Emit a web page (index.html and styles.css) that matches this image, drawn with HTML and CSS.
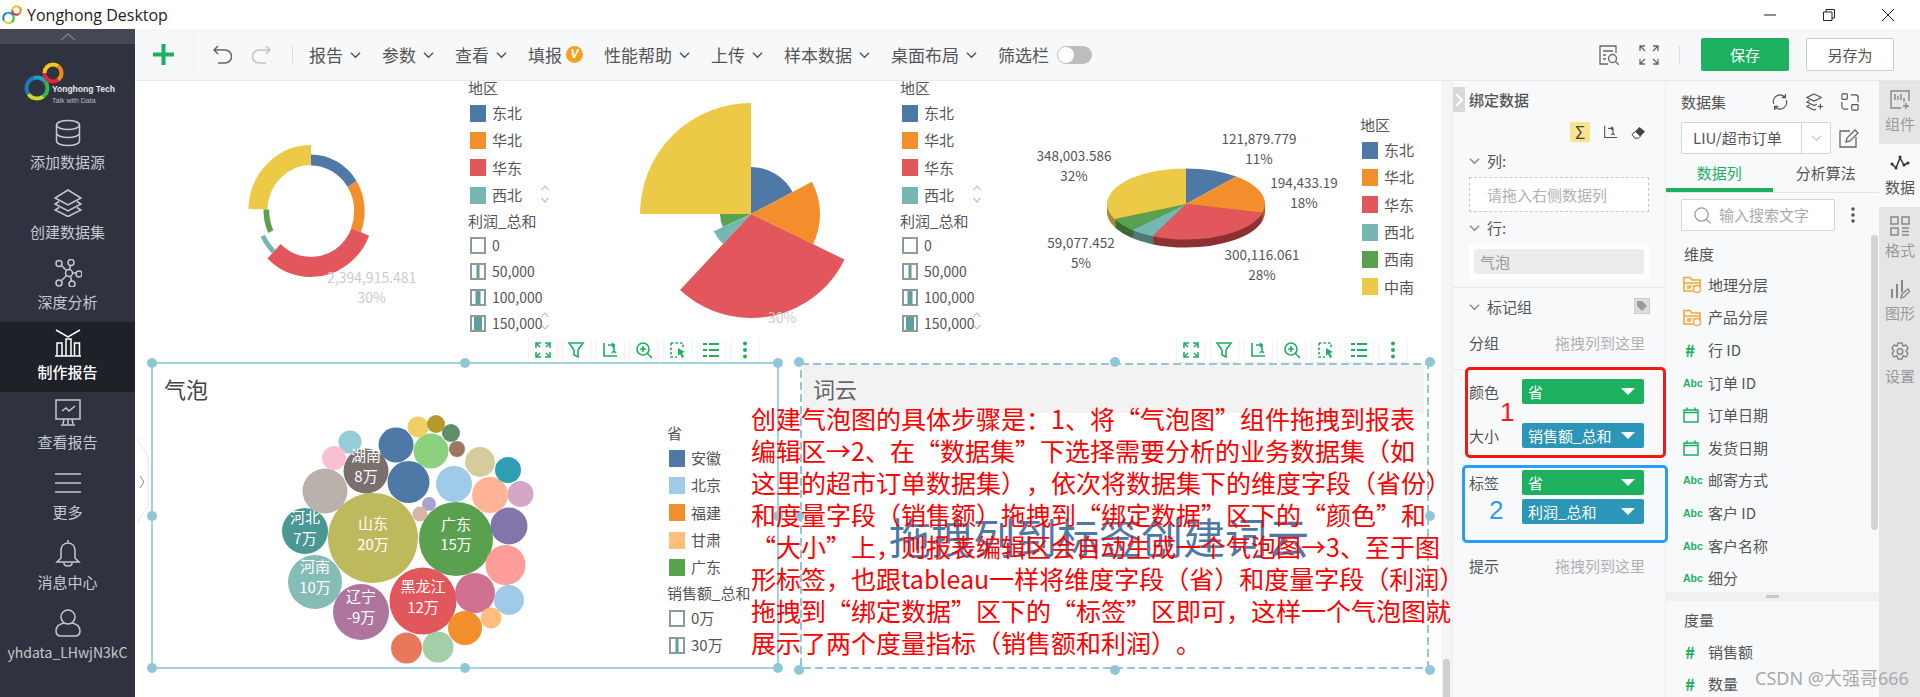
FILE: index.html
```html
<!DOCTYPE html>
<html lang="zh-CN">
<head>
	<meta charset="utf-8">
	<title>Yonghong Desktop</title>
	<link rel="stylesheet" href="styles.css">
</head>
<body>
	<svg class="defs" width="0" height="0">
		<symbol id="logo" viewBox="0 0 40 40">
			<g fill="none" stroke-width="4">
				<circle cx="13" cy="26" r="10.5" stroke="#1b7cc4" pathLength="100" stroke-dasharray="30 70" stroke-dashoffset="-40"/>
				<circle cx="13" cy="26" r="10.5" stroke="#18a6b8" pathLength="100" stroke-dasharray="20 80" stroke-dashoffset="-70"/>
				<circle cx="13" cy="26" r="10.5" stroke="#3ab54a" pathLength="100" stroke-dasharray="25 75" stroke-dashoffset="-90"/>
				<circle cx="13" cy="26" r="10.5" stroke="#c9d92f" pathLength="100" stroke-dasharray="25 75" stroke-dashoffset="-15"/>
				<circle cx="29" cy="11" r="8.5" stroke="#f7c51e" pathLength="100" stroke-dasharray="35 65" stroke-dashoffset="-50"/>
				<circle cx="29" cy="11" r="8.5" stroke="#f28a1e" pathLength="100" stroke-dasharray="30 70" stroke-dashoffset="-85"/>
				<circle cx="29" cy="11" r="8.5" stroke="#e5243f" pathLength="100" stroke-dasharray="35 65" stroke-dashoffset="-15"/>
			</g>
		</symbol>
		<symbol id="chev" viewBox="0 0 12 8"><polyline points="1,1.5 6,6.5 11,1.5" fill="none" stroke="currentColor" stroke-width="1.5"/></symbol>
		<symbol id="t-expand" viewBox="0 0 18 18"><path d="M2 7V2h5M11 2h5v5M16 11v5h-5M7 16H2v-5M2 2l4 4M16 2l-4 4M16 16l-4-4M2 16l4-4" fill="none" stroke="currentColor" stroke-width="1.6"/></symbol>
		<symbol id="t-filter" viewBox="0 0 18 18"><path d="M2 2h14l-5 7v7l-4-2V9z" fill="none" stroke="currentColor" stroke-width="1.6"/></symbol>
		<symbol id="t-axis" viewBox="0 0 18 18"><path d="M3 2v13h13M7 4h6v6M11 2l2 2-2 2M11 12l2-2 2 2" fill="none" stroke="currentColor" stroke-width="1.6"/></symbol>
		<symbol id="t-zoom" viewBox="0 0 18 18"><circle cx="8" cy="8" r="6" fill="none" stroke="currentColor" stroke-width="1.6"/><path d="M12.5 12.5L17 17M5 8h6M8 5v6" fill="none" stroke="currentColor" stroke-width="1.6"/></symbol>
		<symbol id="t-select" viewBox="0 0 18 18"><path d="M2 2h12v6M2 2v14h6" fill="none" stroke="currentColor" stroke-width="1.6" stroke-dasharray="2.5 2"/><path d="M9 7l7 4-3 1 2 4-2 1-2-4-2 2z" fill="currentColor"/></symbol>
		<symbol id="t-list" viewBox="0 0 18 18"><path d="M1 3h4M7 3h10M1 9h4M7 9h10M1 15h4M7 15h10" fill="none" stroke="currentColor" stroke-width="2.2"/></symbol>
		<symbol id="t-dots" viewBox="0 0 18 18"><circle cx="9" cy="2.5" r="2" fill="currentColor"/><circle cx="9" cy="9" r="2" fill="currentColor"/><circle cx="9" cy="15.5" r="2" fill="currentColor"/></symbol>
		<symbol id="folder" viewBox="0 0 18 17"><path d="M1 15V1.500h6l2 2.500h8v11z" fill="none" stroke="#f5a63a" stroke-width="1.600"/><path d="M1 7h16M4 10h4l-1 2H4M10 10h3" fill="none" stroke="#f5a63a" stroke-width="1.300"/><circle cx="14" cy="13" r="3.500" fill="#f8f9fb" stroke="#f5a63a" stroke-width="1.300"/></symbol>
		<symbol id="cal" viewBox="0 0 16 16"><path d="M1 3h14v12H1zM1 5.500h14" fill="none" stroke="#1db05e" stroke-width="1.500"/><path d="M4 .5v3M12 .5v3" stroke="#1db05e" stroke-width="1.500"/></symbol>
		<symbol id="updown" viewBox="0 0 10 20"><path d="M1.500 6l3.500-4 3.500 4M1.500 14l3.500 4 3.500-4" fill="none" stroke="#b5b5b5" stroke-width="1.100"/></symbol>
	</svg>

	<header class="titlebar">
		<svg class="title-logo"><use href="#logo"/></svg>
		<span class="title-text">Yonghong Desktop</span>
		<div class="win-btns">
			<svg viewBox="0 0 14 14"><path d="M1 7h12" stroke="#222" fill="none"/></svg>
			<svg viewBox="0 0 14 14"><path d="M1.500 4h8.500v8.500H1.500zM4 4V1.500h8.500V10H10" stroke="#222" fill="none"/></svg>
			<svg viewBox="0 0 14 14"><path d="M1 1l12 12M13 1L1 13" stroke="#222" fill="none"/></svg>
		</div>
	</header>

	<div class="main">
		<nav class="sidebar">
			<div class="side-top"><svg viewBox="0 0 16 8"><polyline points="1,7 8,1 15,7" fill="none" stroke="#777b86" stroke-width="1.600"/></svg></div>
			<div class="side-logo">
				<svg class="side-logo-mark"><use href="#logo"/></svg>
				<div class="side-logo-text"><b>Yonghong Tech</b><span>Talk with Data</span></div>
			</div>
			<a class="side-item">
				<svg viewBox="0 0 28 28"><ellipse cx="14" cy="6" rx="11.500" ry="4.500"/><path d="M2.500 6v16c0 2.500 5 4.500 11.500 4.500S25.500 24.500 25.500 22V6M2.500 14c0 2.500 5 4.500 11.500 4.500S25.500 16.500 25.500 14"/></svg>
				<span>添加数据源</span>
			</a>
			<a class="side-item">
				<svg viewBox="0 0 28 28"><path d="M14 1L27 9 14 16 1 9zM5 12.500l-4 2.500 13 7 13-7-4-2.500M5 18.500L1 21l13 6.500L27 21l-4-2.500"/></svg>
				<span>创建数据集</span>
			</a>
			<a class="side-item">
				<svg viewBox="0 0 28 28"><circle cx="15" cy="14" r="3.500"/><circle cx="5" cy="4.500" r="3"/><circle cx="17" cy="3.500" r="3"/><circle cx="25" cy="15" r="3"/><circle cx="18" cy="25" r="3"/><circle cx="5" cy="24" r="3"/><path d="M7.500 6.500l5 5M16.500 6.500l-1 4M18.500 14h3.500M16.500 17.500l1 4.500M12.500 16.500l-5.500 5.500"/></svg>
				<span>深度分析</span>
			</a>
			<a class="side-item active">
				<svg viewBox="0 0 28 28"><path d="M2 1l12 7 12-7M3 27V14h5v13zM12 27V10h5v17zM20.500 27V14h5v13zM1 27h26"/></svg>
				<span>制作报告</span>
			</a>
			<a class="side-item">
				<svg viewBox="0 0 28 28"><path d="M2 1h24v19H2zM8 12l4-3 3 3 6-5M14 20v5M7 26h14M9 25l1-5M19 25l-1-5"/></svg>
				<span>查看报告</span>
			</a>
			<a class="side-item">
				<svg viewBox="0 0 28 28"><path d="M1 5h26M1 14h26M1 23h26"/></svg>
				<span>更多</span>
			</a>
			<a class="side-item">
				<svg viewBox="0 0 28 28"><path d="M14 1v3M14 4c-5 0-7 4-7 8v7l-4 4h22l-4-4v-7c0-4-2-8-7-8zM10 24c0 2 2 3 4 3s4-1 4-3"/></svg>
				<span>消息中心</span>
			</a>
			<a class="side-item side-user">
				<svg viewBox="0 0 28 28"><ellipse cx="14" cy="8" rx="7" ry="7"/><path d="M10 14c-5 1-8 4-8 8 0 3 2 5 5 5h14c3 0 5-2 5-5 0-4-3-7-8-8"/></svg>
				<span>yhdata_LHwjN3kC</span>
			</a>
		</nav>

		<div class="content">
			<div class="toolbar">
				<svg class="tb-plus" viewBox="0 0 21 21"><path d="M10.500 0v21M0 10.500h21" stroke="#1db05e" stroke-width="4"/></svg>
				<span class="tb-sep tb-sep-tall"></span>
				<svg class="tb-hist" viewBox="0 0 20 20"><path d="M6 1L2 5l4 4M2 5h11a6 6 0 0 1 0 13H6" fill="none" stroke="#666" stroke-width="1.500"/></svg>
				<svg class="tb-hist" viewBox="0 0 20 20"><path d="M14 1l4 4-4 4M18 5H7a6 6 0 0 0 0 13h7" fill="none" stroke="#c4c4c4" stroke-width="1.500"/></svg>
				<span class="tb-sep"></span>
				<div class="tb-menu">
					<span class="tb-item">报告<svg><use href="#chev"/></svg></span>
					<span class="tb-item">参数<svg><use href="#chev"/></svg></span>
					<span class="tb-item">查看<svg><use href="#chev"/></svg></span>
					<span class="tb-item tb-fill">填报<i class="tb-badge">V</i></span>
					<span class="tb-item">性能帮助<svg><use href="#chev"/></svg></span>
					<span class="tb-item">上传<svg><use href="#chev"/></svg></span>
					<span class="tb-item">样本数据<svg><use href="#chev"/></svg></span>
					<span class="tb-item">桌面布局<svg><use href="#chev"/></svg></span>
					<span class="tb-item tb-filter">筛选栏<i class="toggle"></i></span>
				</div>
				<div class="tb-right">
					<svg class="tb-icon" viewBox="0 0 20 20"><path d="M17 8V1H1v18h8M4 6h10M4 10h3M4 14h3" fill="none" stroke="#666" stroke-width="1.300"/><circle cx="13.500" cy="13.500" r="4" fill="none" stroke="#666" stroke-width="1.300"/><path d="M16.500 16.500L20 20" stroke="#666" stroke-width="1.300"/></svg>
					<svg class="tb-icon" viewBox="0 0 20 20"><path d="M1 6V1h5M1 1l5 5M19 6V1h-5M19 1l-5 5M1 14v5h5M1 19l5-5M19 14v5h-5M19 19l-5-5" fill="none" stroke="#666" stroke-width="1.300"/></svg>
					<span class="tb-sep"></span>
					<button class="btn-save">保存</button>
					<button class="btn-saveas">另存为</button>
				</div>
			</div>

			<div class="workspace">
				<section class="canvas">
					<svg class="side-tab" viewBox="0 0 12 86"><path d="M1 0c0 8 10 12 10 22v42C11 74 1 78 1 86" fill="#fff" stroke="#e6e7ee"/><polyline points="3,38 7,44 3,50" fill="none" stroke="#888"/></svg>

					<svg class="chart-donut" viewBox="240 135 135 150">
						<g fill="none" transform="translate(311 211) scale(.95 1) rotate(-90) translate(-311 -211)">
							<circle cx="311" cy="211" r="51" stroke-width="11" stroke="#4e79a7" pathLength="360" stroke-dasharray="58 360"/>
							<circle cx="311" cy="211" r="51" stroke-width="11" stroke="#f28e2b" pathLength="360" stroke-dasharray="54 360" stroke-dashoffset="-58"/>
							<circle cx="311" cy="211" r="56" stroke-width="20" stroke="#e1575b" pathLength="360" stroke-dasharray="112 360" stroke-dashoffset="-112"/>
							<circle cx="311" cy="211" r="56.500" stroke-width="5" stroke="#76b7b2" pathLength="360" stroke-dasharray="20 360" stroke-dashoffset="-224"/>
							<circle cx="311" cy="211" r="47" stroke-width="6" stroke="#59a14f" pathLength="360" stroke-dasharray="28 360" stroke-dashoffset="-244"/>
							<circle cx="311" cy="211" r="56" stroke-width="20" stroke="#edc948" pathLength="360" stroke-dasharray="88 360" stroke-dashoffset="-272"/>
						</g>
					</svg>
					<div class="pct pct-donut">2,394,915.481<br>30%</div>
					<div class="legend legend-a">
						<div class="legend-title">地区</div>
						<div class="legend-row"><i class="sw c-blue"></i>东北</div>
						<div class="legend-row"><i class="sw c-orange"></i>华北</div>
						<div class="legend-row"><i class="sw c-red"></i>华东</div>
						<div class="legend-row"><i class="sw c-teal"></i>西北</div>
						<div class="legend-title">利润_总和</div>
						<div class="legend-row size"><i class="sw-size"></i>0</div>
						<div class="legend-row size"><i class="sw-size s1"></i>50,000</div>
						<div class="legend-row size"><i class="sw-size s2"></i>100,000</div>
						<div class="legend-row size"><i class="sw-size s3"></i>150,000</div>
						<svg class="updown ud-1"><use href="#updown"/></svg>
						<svg class="updown ud-2"><use href="#updown"/></svg>
					</div>

					<svg class="chart-rose" viewBox="635 100 220 222">
						<g fill="none" transform="rotate(-90 751 214)">
							<circle cx="751" cy="214" r="23.500" stroke-width="47" stroke="#4e79a7" pathLength="360" stroke-dasharray="62 360"/>
							<circle cx="751" cy="214" r="15.500" stroke-width="31" stroke="#59a14f" pathLength="360" stroke-dasharray="25 360" stroke-dashoffset="-245"/>
							<circle cx="751" cy="214" r="20.500" stroke-width="41" stroke="#76b7b2" pathLength="360" stroke-dasharray="22 360" stroke-dashoffset="-223"/>
							<circle cx="751" cy="214" r="34.500" stroke-width="69" stroke="#f28e2b" pathLength="360" stroke-dasharray="54 360" stroke-dashoffset="-62"/>
							<circle cx="751" cy="214" r="52" stroke-width="104" stroke="#e1575b" pathLength="360" stroke-dasharray="107 360" stroke-dashoffset="-116"/>
							<circle cx="751" cy="214" r="55.500" stroke-width="111" stroke="#edc948" pathLength="360" stroke-dasharray="90 360" stroke-dashoffset="-270"/>
						</g>
					</svg>
					<div class="pct pct-rose">30%</div>
					<div class="legend legend-b">
						<div class="legend-title">地区</div>
						<div class="legend-row"><i class="sw c-blue"></i>东北</div>
						<div class="legend-row"><i class="sw c-orange"></i>华北</div>
						<div class="legend-row"><i class="sw c-red"></i>华东</div>
						<div class="legend-row"><i class="sw c-teal"></i>西北</div>
						<div class="legend-title">利润_总和</div>
						<div class="legend-row size"><i class="sw-size"></i>0</div>
						<div class="legend-row size"><i class="sw-size s1"></i>50,000</div>
						<div class="legend-row size"><i class="sw-size s2"></i>100,000</div>
						<div class="legend-row size"><i class="sw-size s3"></i>150,000</div>
						<svg class="updown ud-1"><use href="#updown"/></svg>
						<svg class="updown ud-2"><use href="#updown"/></svg>
					</div>

					<svg class="chart-pie" viewBox="1100 160 175 95">
						<g fill="none">
							<g id="pie-side" transform="translate(1186 212) scale(1 .45) rotate(-90)">
								<circle r="39.500" stroke-width="79" stroke="#a3601c" pathLength="360" stroke-dasharray="65 360" stroke-dashoffset="-39.600"/>
								<circle r="39.500" stroke-width="79" stroke="#8c3133" pathLength="360" stroke-dasharray="101 360" stroke-dashoffset="-104.400"/>
								<circle r="39.500" stroke-width="79" stroke="#4b7a78" pathLength="360" stroke-dasharray="18 360" stroke-dashoffset="-205.200"/>
								<circle r="39.500" stroke-width="79" stroke="#3a6a34" pathLength="360" stroke-dasharray="21.600 360" stroke-dashoffset="-223.200"/>
								<circle r="39.500" stroke-width="79" stroke="#a38c32" pathLength="360" stroke-dasharray="115.200 360" stroke-dashoffset="-244.800"/>
							</g>
							<use href="#pie-side" y="-2"/>
							<use href="#pie-side" y="-4"/>
							<use href="#pie-side" y="-6"/>
							<g transform="translate(1186 204) scale(1 .45) rotate(-90)">
								<circle r="39.500" stroke-width="79" stroke="#4e79a7" pathLength="360" stroke-dasharray="39.600 360"/>
								<circle r="39.500" stroke-width="79" stroke="#f28e2b" pathLength="360" stroke-dasharray="64.800 360" stroke-dashoffset="-39.600"/>
								<circle r="39.500" stroke-width="79" stroke="#e1575b" pathLength="360" stroke-dasharray="100.800 360" stroke-dashoffset="-104.400"/>
								<circle r="39.500" stroke-width="79" stroke="#76b7b2" pathLength="360" stroke-dasharray="18 360" stroke-dashoffset="-205.200"/>
								<circle r="39.500" stroke-width="79" stroke="#59a14f" pathLength="360" stroke-dasharray="21.600 360" stroke-dashoffset="-223.200"/>
								<circle r="39.500" stroke-width="79" stroke="#edc948" pathLength="360" stroke-dasharray="115.200 360" stroke-dashoffset="-244.800"/>
							</g>
						</g>
					</svg>
					<div class="pie-label pl-1">121,879.779<br>11%</div>
					<div class="pie-label pl-2">348,003.586<br>32%</div>
					<div class="pie-label pl-3">194,433.19<br>18%</div>
					<div class="pie-label pl-4">59,077.452<br>5%</div>
					<div class="pie-label pl-5">300,116.061<br>28%</div>
					<div class="legend legend-c">
						<div class="legend-title">地区</div>
						<div class="legend-row"><i class="sw c-blue"></i>东北</div>
						<div class="legend-row"><i class="sw c-orange"></i>华北</div>
						<div class="legend-row"><i class="sw c-red"></i>华东</div>
						<div class="legend-row"><i class="sw c-teal"></i>西北</div>
						<div class="legend-row"><i class="sw c-green"></i>西南</div>
						<div class="legend-row"><i class="sw c-yellow"></i>中南</div>
					</div>

					<div class="w-tools w-tools-a">
						<span><svg><use href="#t-expand"/></svg></span>
						<span><svg><use href="#t-filter"/></svg></span>
						<span><svg><use href="#t-axis"/></svg></span>
						<span><svg><use href="#t-zoom"/></svg></span>
						<span><svg><use href="#t-select"/></svg></span>
						<span><svg><use href="#t-list"/></svg></span>
						<span><svg><use href="#t-dots"/></svg></span>
					</div>
					<div class="w-tools w-tools-b">
						<span><svg><use href="#t-expand"/></svg></span>
						<span><svg><use href="#t-filter"/></svg></span>
						<span><svg><use href="#t-axis"/></svg></span>
						<span><svg><use href="#t-zoom"/></svg></span>
						<span><svg><use href="#t-select"/></svg></span>
						<span><svg><use href="#t-list"/></svg></span>
						<span><svg><use href="#t-dots"/></svg></span>
					</div>

					<!-- 气泡 -->
					<div class="frame frame-bubble">
						<h3 class="bubble-title">气泡</h3>
						<i class="handle tl"></i><i class="handle tm"></i><i class="handle tr"></i>
						<i class="handle ml"></i><i class="handle mr"></i>
						<i class="handle bl"></i><i class="handle bm"></i><i class="handle br"></i>
					</div>
					<svg class="chart-bubble" viewBox="280 410 260 260">
						<circle cx="373" cy="538" r="45" fill="#bfb95e"/>
						<circle cx="456" cy="539" r="37" fill="#59a14f"/>
						<circle cx="423" cy="601" r="33.500" fill="#e1575b"/>
						<circle cx="361" cy="612" r="28" fill="#ae769f"/>
						<circle cx="315" cy="582" r="27" fill="#86bcb6"/>
						<circle cx="305" cy="531" r="23" fill="#499894"/>
						<circle cx="366" cy="471" r="22.500" fill="#79706e"/>
						<circle cx="325" cy="491" r="22.500" fill="#bab0ac"/>
						<circle cx="408.500" cy="482" r="21" fill="#4e79a7"/>
						<circle cx="396" cy="445" r="17.500" fill="#4e79a7"/>
						<circle cx="431" cy="451" r="17.500" fill="#8cd17d"/>
						<circle cx="454" cy="484" r="18" fill="#a0cbe8"/>
						<circle cx="490" cy="495" r="18" fill="#ffb595"/>
						<circle cx="480" cy="462" r="15" fill="#d7cc9e"/>
						<circle cx="508" cy="470" r="13" fill="#2e9fb3"/>
						<circle cx="520.500" cy="494" r="13" fill="#d4a6c8"/>
						<circle cx="509" cy="526" r="18.500" fill="#8175aa"/>
						<circle cx="505.500" cy="565" r="20" fill="#ff9d9a"/>
						<circle cx="475" cy="593" r="20" fill="#d07192"/>
						<circle cx="509" cy="600" r="15" fill="#a0cbe8"/>
						<circle cx="491" cy="618" r="10.500" fill="#ffbe7d"/>
						<circle cx="465" cy="628" r="17" fill="#f28e2b"/>
						<circle cx="438" cy="647" r="15.500" fill="#a2ceaa"/>
						<circle cx="406.500" cy="648" r="15.500" fill="#e8785c"/>
						<circle cx="418" cy="427" r="10.500" fill="#f1ce63"/>
						<circle cx="436" cy="424" r="9" fill="#b6992d"/>
						<circle cx="451" cy="433" r="9" fill="#5f8d68"/>
						<circle cx="457" cy="449" r="8" fill="#9d7660"/>
						<circle cx="350" cy="442" r="11.500" fill="#96ccd6"/>
						<circle cx="334" cy="458" r="12" fill="#fabfd2"/>
						<circle cx="429" cy="504" r="7" fill="#a9a3cf"/>
						<circle cx="420" cy="514" r="7.500" fill="#d9b4a6"/>
						<g class="bubble-text">
							<text x="373" y="529">山东</text><text x="373" y="550">20万</text>
							<text x="456" y="530">广东</text><text x="456" y="550">15万</text>
							<text x="423" y="592">黑龙江</text><text x="423" y="613">12万</text>
							<text x="361" y="602">辽宁</text><text x="361" y="623">-9万</text>
							<text x="315" y="572">河南</text><text x="315" y="593">10万</text>
							<text x="305" y="523">河北</text><text x="305" y="544">7万</text>
							<text x="366" y="461">湖南</text><text x="366" y="482">8万</text>
						</g>
					</svg>
					<div class="legend legend-d">
						<div class="legend-title">省</div>
						<div class="legend-row"><i class="sw c-blue"></i>安徽</div>
						<div class="legend-row"><i class="sw c-lblue"></i>北京</div>
						<div class="legend-row"><i class="sw c-orange"></i>福建</div>
						<div class="legend-row"><i class="sw c-peach"></i>甘肃</div>
						<div class="legend-row"><i class="sw c-green"></i>广东</div>
						<div class="legend-title">销售额_总和</div>
						<div class="legend-row"><i class="sw-size"></i>0万</div>
						<div class="legend-row"><i class="sw-size s1"></i>30万</div>
					</div>

					<!-- 词云 -->
					<div class="frame-word">
						<svg class="dash-line" viewBox="0 0 629 306"><rect x="1" y="1" width="627" height="304" fill="none" stroke="#8fc7d8" stroke-width="2" stroke-dasharray="8 4"/></svg>
						<div class="word-head">词云</div>
						<div class="word-hint">拖拽列到标签创建词云</div>
						<i class="handle tl"></i><i class="handle tm"></i><i class="handle tr"></i>
						<i class="handle ml"></i><i class="handle mr"></i>
						<i class="handle bl"></i><i class="handle bm"></i><i class="handle br"></i>
					</div>

					<div class="note">创建气泡图的具体步骤是：1、将“气泡图”组件拖拽到报表<br>编辑区→2、在“数据集”下选择需要分析的业务数据集（如<br>这里的超市订单数据集），依次将数据集下的维度字段（省份）<br>和度量字段（销售额）拖拽到“绑定数据”区下的“颜色”和<br>“大小”上，则报表编辑区会自动生成一个气泡图→3、至于图<br>形标签，也跟tableau一样将维度字段（省）和度量字段（利润）<br>拖拽到“绑定数据”区下的“标签”区即可，这样一个气泡图就<br>展示了两个度量指标（销售额和利润）。</div>
				</section>

				<div class="canvas-scroll"><i></i></div>

				<section class="bind">
					<div class="collapse"><svg viewBox="0 0 8 14"><polyline points="1,1 7,7 1,13" fill="none" stroke="#fff" stroke-width="1.800"/></svg></div>
					<div class="bind-head">绑定数据</div>
					<div class="bind-tools">
						<span class="sigma">Σ</span>
						<svg viewBox="0 0 18 18"><path d="M2 1v14h15M6 4h6v6M10 2l2 2-2 2M10 12l2-2 2 2" fill="none" stroke="#555" stroke-width="1.300"/></svg>
						<svg viewBox="0 0 16 14"><path d="M1 9l8-8 6 5-7 7H4z" fill="#444"/><path d="M1 9l3 4h4l2-2-5-5z" fill="#fff" stroke="#444"/></svg>
					</div>
					<div class="bind-label"><svg><use href="#chev"/></svg>列:</div>
					<div class="drop-box">请拖入右侧数据列</div>
					<div class="bind-label"><svg><use href="#chev"/></svg>行:</div>
					<div class="row-box"><span>气泡</span></div>
					<div class="mark-head">
						<svg><use href="#chev"/></svg>标记组
						<svg class="tag-icon" viewBox="0 0 16 16"><rect x=".5" y=".5" width="15" height="15" fill="#ddd" stroke="#ccc"/><path d="M3 3h5l5 5-5 5-5-5z" fill="#999"/></svg>
					</div>
					<div class="mark-line group-line"><span>分组</span><em>拖拽列到这里</em></div>
					<div class="mark-group first">
						<div class="mark-row"><span>颜色</span><b class="chip green">省</b></div>
						<div class="mark-row"><span>大小</span><b class="chip blue">销售额_总和</b></div>
					</div>
					<div class="mark-group second">
						<div class="mark-row"><span>标签</span><b class="chip green">省</b></div>
						<div class="mark-row"><span></span><b class="chip blue">利润_总和</b></div>
					</div>
					<div class="mark-line tip"><span>提示</span><em>拖拽列到这里</em></div>
					<div class="mark-box red-box"></div>
					<div class="mark-box blue-box"></div>
					<span class="mark-no no-1">1</span>
					<span class="mark-no no-2">2</span>
				</section>

				<section class="data">
					<div class="data-head">
						<span>数据集</span>
						<svg viewBox="0 0 20 20"><path d="M3 12A7.500 7.500 0 0 1 16 5M17 8a7.500 7.500 0 0 1-13 7M16 1v4h-4M4 19v-4h4" fill="none" stroke="#555" stroke-width="1.400"/></svg>
						<svg viewBox="0 0 20 20"><path d="M9 1l8 4-8 4-8-4zM4 8L1 10l8 4 3-1.500M4 13l-3 2 8 4 2-1M13 15h6M16 12v6" fill="none" stroke="#555" stroke-width="1.300"/></svg>
						<svg viewBox="0 0 20 20"><rect x="1" y="1" width="6" height="6" rx="1" fill="none" stroke="#555" stroke-width="1.300"/><rect x="12" y="13" width="7" height="6" rx="1" fill="none" stroke="#555" stroke-width="1.300"/><path d="M11 2h5a3 3 0 0 1 3 3v5M8 18H4a3 3 0 0 1-3-3v-5" fill="none" stroke="#555" stroke-width="1.300"/></svg>
					</div>
					<div class="data-select">
						<div class="select-box"><span>LIU/超市订单</span><i><svg><use href="#chev"/></svg></i></div>
						<svg viewBox="0 0 20 20"><path d="M17 9v10H1V3h10" fill="none" stroke="#666" stroke-width="1.300"/><path d="M7 14l1-4 8-8 3 3-8 8z" fill="none" stroke="#666" stroke-width="1.300"/></svg>
					</div>
					<div class="data-tabs"><span class="on">数据列</span><span>分析算法</span></div>
					<div class="data-search">
						<div class="search-box">
							<svg viewBox="0 0 18 18"><circle cx="8" cy="8" r="7" fill="none" stroke="#999" stroke-width="1.300"/><path d="M13 13l4.500 4.500" stroke="#999" stroke-width="1.300"/></svg>
							<span>输入搜索文字</span>
						</div>
						<svg class="search-more" viewBox="0 0 4 16"><circle cx="2" cy="2" r="1.800" fill="#555"/><circle cx="2" cy="8" r="1.800" fill="#555"/><circle cx="2" cy="14" r="1.800" fill="#555"/></svg>
					</div>
					<div class="field-list">
						<div class="field-title">维度</div>
						<div class="field"><i class="fi"><svg class="fi-folder"><use href="#folder"/></svg></i>地理分层</div>
						<div class="field"><i class="fi"><svg class="fi-folder"><use href="#folder"/></svg></i>产品分层</div>
						<div class="field"><i class="fi num">#</i>行 ID</div>
						<div class="field"><i class="fi abc">Abc</i>订单 ID</div>
						<div class="field"><i class="fi"><svg class="fi-cal"><use href="#cal"/></svg></i>订单日期</div>
						<div class="field"><i class="fi"><svg class="fi-cal"><use href="#cal"/></svg></i>发货日期</div>
						<div class="field"><i class="fi abc">Abc</i>邮寄方式</div>
						<div class="field"><i class="fi abc">Abc</i>客户 ID</div>
						<div class="field"><i class="fi abc">Abc</i>客户名称</div>
						<div class="field"><i class="fi abc">Abc</i>细分</div>
						<i class="list-thumb"></i>
					</div>
					<div class="splitter"><i></i></div>
					<div class="field-title lower">度量</div>
					<div class="field"><i class="fi num">#</i>销售额</div>
					<div class="field"><i class="fi num">#</i>数量</div>
				</section>

				<aside class="rail">
					<div class="rail-item">
						<svg viewBox="0 0 20 20"><path d="M11 18H1V1h18v10M5 4v6M8 6v4M11 4v6M14 8v4M16 13v6M13 16h6" fill="none" stroke="#888" stroke-width="1.400"/></svg>
						<span>组件</span>
					</div>
					<div class="rail-item on">
						<svg viewBox="0 0 20 18"><path d="M2 10l4 4 4-10 4 7 4-2" fill="none" stroke="#333" stroke-width="1.500"/><circle cx="2" cy="10" r="1.500" fill="#333"/><circle cx="6" cy="14" r="1.500" fill="#333"/><circle cx="10" cy="3" r="1.500" fill="#333"/><circle cx="14" cy="11" r="1.500" fill="#333"/><circle cx="18" cy="9" r="1.500" fill="#333"/></svg>
						<span>数据</span>
					</div>
					<div class="rail-item">
						<svg viewBox="0 0 20 20"><path d="M1 1h7v7H1zM12 1h7v7h-7zM1 12h7v7H1zM12 12h7M12 15.500h7M12 19h7" fill="none" stroke="#888" stroke-width="1.500"/></svg>
						<span>格式</span>
					</div>
					<div class="rail-item">
						<svg viewBox="0 0 20 20"><path d="M2 10v9M7 5v14M12 1v12" fill="none" stroke="#888" stroke-width="2"/><path d="M11 19l1-4 6-5 2 2-6 6z" fill="none" stroke="#888" stroke-width="1.400"/></svg>
						<span>图形</span>
					</div>
					<div class="rail-item">
						<svg viewBox="0 0 20 20"><path d="M8 1h4l1 3 3-1 2 3.500-2 2.500 2 2.500-2 3.500-3-1-1 3H8l-1-3-3 1-2-3.500L4 9 2 6.500 4 3l3 1z" fill="none" stroke="#888" stroke-width="1.400"/><circle cx="10" cy="9.500" r="2.800" fill="none" stroke="#888" stroke-width="1.400"/></svg>
						<span>设置</span>
					</div>
				</aside>
			</div>
		</div>
	</div>
	<div class="csdn">CSDN @大强哥666</div>
</body>
</html>
```
FILE: styles.css
```css
* {
	margin: 0;
	padding: 0;
	box-sizing: border-box;
}
html, body {
	width: 1920px;
	height: 697px;
	overflow: hidden;
}
body {
	position: relative;
	background: #fff;
	color: #555;
	font-family: "Noto Sans CJK SC", "Noto Sans", sans-serif;
	font-size: 15px;
	line-height: 22px;
}
i, em {
	font-style: normal;
}
.defs {
	position: absolute;
}

/* 标题栏 */
.titlebar {
	display: flex;
	align-items: center;
	height: 29px;
	padding-left: 2px;
	background: #fff;
}
.title-logo {
	width: 20px;
	height: 20px;
}
.title-text {
	margin-left: 5px;
	font-family: "Open Sans", sans-serif;
	font-size: 16px;
	color: #222;
}
.win-btns {
	display: flex;
	gap: 45px;
	margin-left: auto;
	margin-right: 25px;
}
.win-btns svg {
	width: 14px;
	height: 14px;
}

.main {
	display: flex;
	height: 668px;
}

/* 左侧导航 */
.sidebar {
	flex: none;
	width: 135px;
	background: #2f3340;
}
.side-top {
	display: flex;
	align-items: center;
	justify-content: center;
	height: 15px;
	background: #454854;
}
.side-top svg {
	width: 16px;
	height: 8px;
}
.side-logo {
	position: relative;
	height: 68px;
}
.side-logo-mark {
	position: absolute;
	left: 24px;
	top: 18px;
	width: 40px;
	height: 40px;
}
.side-logo-text {
	position: absolute;
	left: 52px;
	top: 39px;
	color: #e8e8e8;
	white-space: nowrap;
}
.side-logo-text b {
	display: block;
	font-family: "Liberation Sans", sans-serif;
	font-size: 8.500px;
	line-height: 13px;
}
.side-logo-text span {
	display: block;
	font-family: "Liberation Sans", sans-serif;
	font-size: 7px;
	line-height: 9px;
	color: #bbb;
}
.side-item {
	display: flex;
	flex-direction: column;
	align-items: center;
	height: 70px;
	padding-top: 7px;
	color: #c6c8cd;
	font-size: 15px;
	white-space: nowrap;
}
.side-item svg {
	width: 28px;
	height: 28px;
	margin-bottom: 4px;
	fill: none;
	stroke: #c6c8cd;
	stroke-width: 1.500;
}
.side-item.active {
	background: #1f2129;
	color: #fff;
	font-weight: 500;
}
.side-item.active svg {
	stroke: #fff;
}
.side-user {
	font-size: 14px;
}

/* 工具栏 */
.content {
	flex: 1;
	min-width: 0;
}
.toolbar {
	position: relative;
	display: flex;
	align-items: center;
	height: 52px;
	padding-left: 18px;
	background: #f7f8fa;
	border-bottom: 1px solid #e8e8ef;
}
.tb-plus {
	width: 21px;
	height: 21px;
}
.tb-sep {
	width: 1px;
	height: 17px;
	background: #dcdcdc;
}
.tb-sep-tall {
	height: 42px;
	margin: 0 18px 0 19px;
	background: #eceef1;
}
.tb-hist {
	width: 20px;
	height: 20px;
	margin-right: 20px;
}
.tb-menu {
	display: flex;
	gap: 21px;
	margin-left: 16px;
	font-size: 17px;
	color: #555;
	white-space: nowrap;
}
.tb-item {
	display: flex;
	align-items: center;
}
.tb-item svg {
	width: 11px;
	height: 8px;
	margin-left: 7px;
	color: #555;
}
.tb-badge {
	display: block;
	width: 17px;
	height: 17px;
	margin-left: 4px;
	border-radius: 50%;
	background: #f5a01d;
	color: #fff;
	font: italic bold 12px/17px "Liberation Sans", sans-serif;
	text-align: center;
}
.toggle {
	position: relative;
	display: block;
	width: 35px;
	height: 18px;
	margin-left: 8px;
	border-radius: 9px;
	background: #bdbdbd;
}
.toggle::after {
	content: "";
	position: absolute;
	left: 1px;
	top: 1px;
	width: 16px;
	height: 16px;
	border-radius: 50%;
	background: #fff;
}
.tb-right {
	display: flex;
	align-items: center;
	margin-left: auto;
	margin-right: 26px;
}
.tb-icon {
	width: 20px;
	height: 20px;
	margin-right: 20px;
}
.tb-right .tb-sep {
	margin-right: 21px;
}
.btn-save,
.btn-saveas {
	width: 88px;
	height: 33px;
	border-radius: 2px;
	font: 15px/1 "Noto Sans CJK SC", sans-serif;
}
.btn-save {
	border: none;
	background: #1db05e;
	color: #fff;
}
.btn-saveas {
	margin-left: 17px;
	border: 1px solid #ccc;
	background: #fff;
	color: #555;
}

/* 工作区 */
.workspace {
	display: flex;
	height: 616px;
}
.canvas {
	position: relative;
	flex: none;
	width: 1306px;
	background: #fff;
}
.canvas-scroll {
	position: relative;
	flex: none;
	width: 11px;
	background: #f5f5f7;
}
.canvas-scroll i {
	position: absolute;
	left: 2px;
	top: 578px;
	width: 7px;
	height: 38px;
	border-radius: 4px 4px 0 0;
	background: #cfcfcf;
}
.side-tab {
	position: absolute;
	left: 2px;
	top: 357px;
	width: 12px;
	height: 86px;
}

/* 图表 (画布上自由摆放) */
.chart-donut {
	position: absolute;
	left: 105px;
	top: 54px;
	width: 135px;
	height: 150px;
}
.chart-rose {
	position: absolute;
	left: 500px;
	top: 19px;
	width: 220px;
	height: 222px;
}
.chart-pie {
	position: absolute;
	left: 965px;
	top: 79px;
	width: 175px;
	height: 95px;
}
.chart-bubble {
	position: absolute;
	left: 145px;
	top: 329px;
	width: 260px;
	height: 260px;
}
.bubble-text text {
	fill: #fff;
	font-size: 15px;
	text-anchor: middle;
}
.pct {
	position: absolute;
	color: #ccc;
	font-size: 14px;
	line-height: 20px;
	text-align: center;
}
.pct-donut {
	left: 192px;
	top: 186px;
}
.pct-rose {
	left: 633px;
	top: 226px;
}
.pie-label {
	position: absolute;
	width: 120px;
	color: #555;
	font-size: 13.500px;
	line-height: 20px;
	text-align: center;
}
.pl-1 { left: 1064px; top: 47px; }
.pl-2 { left: 879px; top: 64px; }
.pl-3 { left: 1109px; top: 91px; }
.pl-4 { left: 886px; top: 151px; }
.pl-5 { left: 1067px; top: 163px; }

/* 图例 */
.legend {
	position: absolute;
	color: #555;
	white-space: nowrap;
}
.legend-a { left: 333px; top: -5px; }
.legend-b { left: 765px; top: -5px; }
.legend-c { left: 1225px; top: 32px; }
.legend-d { left: 532px; top: 340px; }
.legend-title {
	height: 23.500px;
	line-height: 24px;
	font-size: 15px;
}
.legend-row {
	display: flex;
	align-items: center;
	height: 27.300px;
	padding-left: 2px;
}
.legend-row.size {
	height: 26px;
	font-size: 14px;
}
.sw,
.sw-size {
	flex: none;
	position: relative;
	width: 16px;
	height: 17px;
	margin-right: 6px;
}
.c-blue { background: #4e79a7; }
.c-orange { background: #f28e2b; }
.c-red { background: #e1575b; }
.c-teal { background: #76b7b2; }
.c-green { background: #59a14f; }
.c-yellow { background: #edc948; }
.c-lblue { background: #a0cbe8; }
.c-peach { background: #ffbe7d; }
.sw-size {
	border: 2px solid #8c9a9d;
	background: #fff;
}
.sw-size::before {
	content: "";
	position: absolute;
	left: 50%;
	top: 0;
	bottom: 0;
	transform: translateX(-50%);
	background: #5f9ea0;
}
.s1::before { width: 3px; }
.s2::before { width: 5px; }
.s3::before { width: 8px; }
.updown {
	position: absolute;
	left: 72px;
	width: 10px;
	height: 20px;
}
.ud-1 { top: 108px; }
.ud-2 { top: 235px; }

/* 组件悬浮工具 */
.w-tools {
	position: absolute;
	top: 257px;
	display: flex;
	gap: 6.800px;
}
.w-tools-a { left: 394px; }
.w-tools-b { left: 1042px; }
.w-tools span {
	display: flex;
	align-items: center;
	justify-content: center;
	width: 27px;
	height: 24px;
	border-radius: 3px;
	background: #fff;
	box-shadow: 0 1px 3px rgba(0, 0, 0, .12);
	color: #1db05e;
}
.w-tools svg {
	width: 18px;
	height: 18px;
}

/* 选中框 */
.frame {
	position: absolute;
	left: 16px;
	top: 281px;
	width: 628px;
	height: 307px;
	border: 2px solid #a3d3df;
}
.bubble-title {
	margin: 9px 0 0 11px;
	font-size: 22px;
	font-weight: 400;
	line-height: 30px;
	color: #444;
}
.frame-word {
	position: absolute;
	left: 665px;
	top: 282px;
	width: 629px;
	height: 306px;
}
.dash-line {
	position: absolute;
	left: 0;
	top: 0;
	width: 629px;
	height: 306px;
}
.word-head {
	position: absolute;
	left: 3px;
	right: 5px;
	top: 2px;
	height: 48px;
	padding-left: 10px;
	background: #f2f2f2;
	color: #666;
	font-size: 22px;
	line-height: 46px;
}
.word-hint {
	position: absolute;
	left: 89px;
	top: 148px;
	width: 424px;
	color: #4e79a7;
	font-size: 42px;
	line-height: 50px;
	white-space: nowrap;
}
.handle {
	position: absolute;
	width: 10px;
	height: 10px;
	border-radius: 50%;
	background: #8fc7d8;
}
.handle.tl { left: -6px; top: -6px; }
.handle.tm { left: calc(50% - 5px); top: -6px; }
.handle.tr { right: -6px; top: -6px; }
.handle.ml { left: -6px; top: calc(50% - 5px); }
.handle.mr { right: -6px; top: calc(50% - 5px); }
.handle.bl { left: -6px; bottom: -6px; }
.handle.bm { left: calc(50% - 5px); bottom: -6px; }
.handle.br { right: -6px; bottom: -6px; }

.note {
	position: absolute;
	left: 616px;
	top: 321px;
	z-index: 5;
	color: #f00;
	font-size: 25px;
	line-height: 32px;
	white-space: nowrap;
	text-spacing-trim: space-all;
}

/* 绑定数据 */
.bind {
	position: relative;
	flex: none;
	width: 214px;
	padding: 0 16px;
	background: #f8f9fb;
	border-left: 1px solid #eceef2;
	border-right: 1px solid #eceef2;
}
.collapse {
	position: absolute;
	left: 0;
	top: 6px;
	display: flex;
	align-items: center;
	justify-content: center;
	width: 12px;
	height: 25px;
	background: #d8d8d8;
}
.collapse svg {
	width: 8px;
	height: 14px;
}
.bind-head {
	height: 38px;
	line-height: 38px;
	font-weight: 500;
}
.bind-tools {
	display: flex;
	align-items: center;
	justify-content: flex-end;
	gap: 13px;
	height: 26px;
	padding-right: 3px;
}
.bind-tools svg {
	width: 15px;
	height: 15px;
}
.sigma {
	width: 20px;
	height: 20px;
	background: #fbe28c;
	color: #444;
	font-size: 17px;
	line-height: 20px;
	text-align: center;
}
.bind-label {
	display: flex;
	align-items: center;
	height: 32px;
	font-size: 15px;
}
.bind-label svg,
.mark-head > svg:first-child {
	width: 11px;
	height: 8px;
	margin-right: 7px;
	color: #888;
}
.drop-box {
	height: 35px;
	padding-left: 17px;
	border: 1px dashed #c8c8c8;
	background: #fff;
	color: #b0b0b0;
	line-height: 33px;
}
.row-box {
	height: 35px;
	padding: 5px;
	background: #fff;
}
.row-box span {
	display: block;
	height: 25px;
	padding-left: 6px;
	border-radius: 3px;
	background: #ececec;
	color: #999;
	line-height: 25px;
}
.mark-head {
	position: relative;
	display: flex;
	align-items: center;
	height: 38px;
	margin: 8px -16px 0;
	padding-left: 16px;
	border-top: 1px solid #e8e9ee;
}
.tag-icon {
	position: absolute;
	right: 15px;
	top: 10px;
	width: 16px;
	height: 16px;
}
.mark-line {
	display: flex;
	justify-content: space-between;
	padding-right: 4px;
	height: 36px;
	line-height: 36px;
}
.mark-line em {
	color: #b0b0b0;
}
.mark-line.group-line {
	height: 45px;
	margin: 0 -16px;
	padding: 0 20px 8px 16px;
	border-bottom: 1px solid #e8e9ee;
}
.mark-line.tip {
	margin-top: 29px;
	height: 26px;
	line-height: 26px;
}
.mark-group {
	display: flex;
	flex-direction: column;
}
.mark-group.first {
	margin-top: 9px;
	gap: 19px;
}
.mark-group.second {
	margin-top: 22px;
	gap: 4px;
}
.mark-row {
	display: flex;
	align-items: center;
	justify-content: space-between;
	padding-right: 5px;
	height: 25px;
}
.chip {
	position: relative;
	width: 122px;
	height: 25px;
	padding-left: 6px;
	border-radius: 2px;
	color: #fff;
	font-weight: 400;
	line-height: 25px;
}
.chip::after {
	content: "";
	position: absolute;
	right: 9px;
	top: 9px;
	border-left: 7px solid transparent;
	border-right: 7px solid transparent;
	border-top: 7px solid #fff;
}
.chip.green { background: #1db05e; }
.chip.blue { background: #2b96b8; }
.mark-box {
	position: absolute;
	border-radius: 5px;
	border: 3px solid;
}
.red-box {
	left: 12px;
	top: 286px;
	width: 201px;
	height: 91px;
	border-color: #f41a12;
}
.blue-box {
	left: 9px;
	top: 384px;
	width: 206px;
	height: 78px;
	border-color: #2a9df4;
}
.mark-no {
	position: absolute;
	font-family: "Liberation Sans", sans-serif;
	font-size: 26px;
	line-height: 26px;
}
.no-1 { left: 47px; top: 318px; color: #f41a12; }
.no-2 { left: 36px; top: 416px; color: #2a9df4; }

/* 数据集 */
.data {
	flex: none;
	width: 213px;
	background: #f8f9fb;
}
.data-head {
	display: flex;
	align-items: center;
	gap: 17px;
	height: 41px;
	padding: 0 20px 0 15px;
}
.data-head span {
	margin-right: auto;
}
.data-head svg {
	width: 18px;
	height: 18px;
}
.data-select {
	display: flex;
	align-items: center;
	gap: 8px;
	padding-left: 15px;
}
.data-select > svg {
	width: 20px;
	height: 20px;
}
.select-box {
	display: flex;
	width: 150px;
	height: 32px;
	border: 1px solid #d5d5d5;
	border-radius: 2px;
	background: #fff;
	line-height: 30px;
}
.select-box span {
	flex: 1;
	padding-left: 11px;
}
.select-box i {
	display: flex;
	align-items: center;
	justify-content: center;
	width: 29px;
	border-left: 1px solid #d5d5d5;
	color: #ccc;
}
.select-box svg {
	width: 11px;
	height: 8px;
}
.data-tabs {
	display: flex;
	height: 39px;
	border-bottom: 1px solid #e4e4e8;
}
.data-tabs span {
	width: 107px;
	padding-top: 8px;
	text-align: center;
}
.data-tabs .on {
	color: #1db05e;
	border-bottom: 4px solid #1db05e;
}
.data-search {
	display: flex;
	align-items: center;
	margin-top: 6px;
	padding-left: 15px;
}
.search-box {
	display: flex;
	align-items: center;
	width: 154px;
	height: 32px;
	padding-left: 12px;
	border: 1px solid #d5d5d5;
	border-radius: 2px;
	background: #fff;
	color: #aaa;
}
.search-box svg {
	width: 17px;
	height: 17px;
	margin-right: 8px;
}
.search-more {
	width: 4px;
	height: 16px;
	margin-left: 16px;
}
.field-list {
	position: relative;
	height: 361px;
	overflow: hidden;
}
.field-title {
	height: 22px;
	margin-top: 12px;
	margin-bottom: 3.500px;
	padding-left: 18px;
}
.field-title.lower {
	margin-top: 8px;
	margin-bottom: 4.500px;
}
.field {
	display: flex;
	align-items: center;
	height: 32.600px;
	padding-left: 17px;
	white-space: nowrap;
}
.fi {
	flex: none;
	display: flex;
	align-items: center;
	width: 25px;
	color: #1db05e;
	font-weight: 700;
}
.fi.num {
	padding-left: 2px;
	font-size: 17px;
}
.fi.abc {
	font-family: "Liberation Sans", sans-serif;
	font-size: 10.500px;
}
.fi-folder {
	width: 18px;
	height: 17px;
}
.fi-cal {
	width: 16px;
	height: 16px;
}
.list-thumb {
	position: absolute;
	right: 1px;
	top: 4px;
	width: 7px;
	height: 295px;
	border-radius: 4px;
	background: #d4d4d6;
}
.splitter {
	display: flex;
	align-items: center;
	justify-content: center;
	height: 9px;
	background: #f0f0f2;
}
.splitter i {
	width: 13px;
	height: 3px;
	background: #c8c8c8;
}

/* 右侧竖条 */
.rail {
	flex: none;
	width: 42px;
	background: #e5e5e7;
}
.rail-item {
	display: flex;
	flex-direction: column;
	align-items: center;
	height: 63px;
	padding-top: 9px;
	color: #999;
}
.rail-item svg {
	width: 20px;
	height: 20px;
	margin-bottom: 3px;
}
.rail-item.on {
	background: #f8f9fb;
	color: #555;
}

.csdn {
	position: absolute;
	left: 1755px;
	top: 667px;
	color: #aaa;
	font-family: "Noto Sans", "Noto Sans CJK SC", sans-serif;
	font-size: 18px;
	line-height: 22px;
	white-space: nowrap;
}
```
